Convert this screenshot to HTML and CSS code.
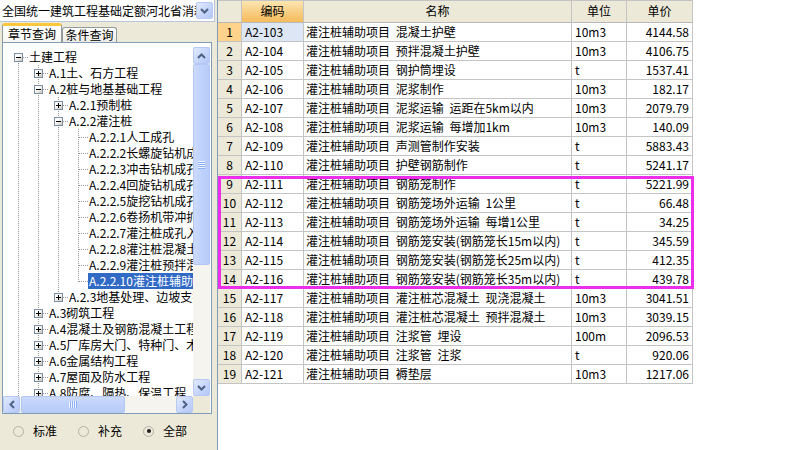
FILE: index.html
```html
<!DOCTYPE html>
<html lang="zh-CN">
<head>
<meta charset="utf-8">
<title>定额查询</title>
<link rel="stylesheet" href="styles.css">
</head>
<body>
<div class="app">
  <aside class="left">
    <div class="combo">
      <span class="combo-text">全国统一建筑工程基础定额河北省消耗量定额</span>
      <span class="sb-btn combo-btn"><svg width="9" height="6" viewBox="0 0 9 6"><path d="M1 1 L4.5 4.5 L8 1" fill="none" stroke="#4D6185" stroke-width="2"/></svg></span>
    </div>
    <div class="tabs">
      <div class="tab active">章节查询</div>
      <div class="tab">条件查询</div>
    </div>
    <div class="tree-box">
      <div class="tree">
        <div class="node"><i class="g f"><b class="exp minus"></b></i><span class="label">土建工程</span></div>
        <div class="node"><i class="g v"></i><i class="g t"><b class="exp plus"></b></i><span class="label">A.1土、石方工程</span></div>
        <div class="node"><i class="g v"></i><i class="g t"><b class="exp minus"></b></i><span class="label">A.2桩与地基基础工程</span></div>
        <div class="node"><i class="g v"></i><i class="g v"></i><i class="g t"><b class="exp plus"></b></i><span class="label">A.2.1预制桩</span></div>
        <div class="node"><i class="g v"></i><i class="g v"></i><i class="g t"><b class="exp minus"></b></i><span class="label">A.2.2灌注桩</span></div>
        <div class="node"><i class="g v"></i><i class="g v"></i><i class="g v"></i><i class="g t"></i><span class="label">A.2.2.1人工成孔</span></div>
        <div class="node"><i class="g v"></i><i class="g v"></i><i class="g v"></i><i class="g t"></i><span class="label">A.2.2.2长螺旋钻机成孔</span></div>
        <div class="node"><i class="g v"></i><i class="g v"></i><i class="g v"></i><i class="g t"></i><span class="label">A.2.2.3冲击钻机成孔</span></div>
        <div class="node"><i class="g v"></i><i class="g v"></i><i class="g v"></i><i class="g t"></i><span class="label">A.2.2.4回旋钻机成孔</span></div>
        <div class="node"><i class="g v"></i><i class="g v"></i><i class="g v"></i><i class="g t"></i><span class="label">A.2.2.5旋挖钻机成孔</span></div>
        <div class="node"><i class="g v"></i><i class="g v"></i><i class="g v"></i><i class="g t"></i><span class="label">A.2.2.6卷扬机带冲抓锥成孔</span></div>
        <div class="node"><i class="g v"></i><i class="g v"></i><i class="g v"></i><i class="g t"></i><span class="label">A.2.2.7灌注桩成孔入岩增加</span></div>
        <div class="node"><i class="g v"></i><i class="g v"></i><i class="g v"></i><i class="g t"></i><span class="label">A.2.2.8灌注桩混凝土</span></div>
        <div class="node"><i class="g v"></i><i class="g v"></i><i class="g v"></i><i class="g t"></i><span class="label">A.2.2.9灌注桩预拌混凝土</span></div>
        <div class="node"><i class="g v"></i><i class="g v"></i><i class="g v"></i><i class="g l"></i><span class="label selected">A.2.2.10灌注桩辅助项目</span></div>
        <div class="node"><i class="g v"></i><i class="g v"></i><i class="g l"><b class="exp plus"></b></i><span class="label">A.2.3地基处理、边坡支护</span></div>
        <div class="node"><i class="g v"></i><i class="g t"><b class="exp plus"></b></i><span class="label">A.3砌筑工程</span></div>
        <div class="node"><i class="g v"></i><i class="g t"><b class="exp plus"></b></i><span class="label">A.4混凝土及钢筋混凝土工程</span></div>
        <div class="node"><i class="g v"></i><i class="g t"><b class="exp plus"></b></i><span class="label">A.5厂库房大门、特种门、木结构工程</span></div>
        <div class="node"><i class="g v"></i><i class="g t"><b class="exp plus"></b></i><span class="label">A.6金属结构工程</span></div>
        <div class="node"><i class="g v"></i><i class="g t"><b class="exp plus"></b></i><span class="label">A.7屋面及防水工程</span></div>
        <div class="node"><i class="g v"></i><i class="g t"><b class="exp plus"></b></i><span class="label">A.8防腐、隔热、保温工程</span></div>
      </div>
      <div class="vscroll">
        <div class="sb-btn"><svg width="9" height="6" viewBox="0 0 9 6"><path d="M1 5 L4.5 1.5 L8 5" fill="none" stroke="#4D6185" stroke-width="2"/></svg></div>
        <div class="sb-thumb vthumb"><span class="grip-v"></span></div>
        <div class="sb-track"></div>
        <div class="sb-btn"><svg width="9" height="6" viewBox="0 0 9 6"><path d="M1 1 L4.5 4.5 L8 1" fill="none" stroke="#4D6185" stroke-width="2"/></svg></div>
      </div>
      <div class="hscroll">
        <div class="sb-btn"><svg width="6" height="9" viewBox="0 0 6 9"><path d="M5 1 L1.5 4.5 L5 8" fill="none" stroke="#4D6185" stroke-width="2"/></svg></div>
        <div class="sb-thumb hthumb"><span class="grip-h"></span></div>
        <div class="sb-track"></div>
        <div class="sb-btn"><svg width="6" height="9" viewBox="0 0 6 9"><path d="M1 1 L4.5 4.5 L1 8" fill="none" stroke="#4D6185" stroke-width="2"/></svg></div>
      </div>
      <div class="sb-corner"></div>
    </div>
    <div class="radios">
      <label class="radio"><span class="dot"></span>标准</label>
      <label class="radio"><span class="dot"></span>补充</label>
      <label class="radio"><span class="dot checked"></span>全部</label>
    </div>
  </aside>

  <main class="right">
    <div class="grid">
      <div class="hd corner"></div><div class="hd sel-col">编码</div><div class="hd">名称</div><div class="hd">单位</div><div class="hd">单价</div>

      <div class="rn cur">1</div><div class="c code focus">A2-103</div><div class="c name">灌注桩辅助项目 混凝土护壁</div><div class="c">10m3</div><div class="c num">4144.58</div>
      <div class="rn">2</div><div class="c code">A2-104</div><div class="c name">灌注桩辅助项目 预拌混凝土护壁</div><div class="c">10m3</div><div class="c num">4106.75</div>
      <div class="rn">3</div><div class="c code">A2-105</div><div class="c name">灌注桩辅助项目 钢护筒埋设</div><div class="c">t</div><div class="c num">1537.41</div>
      <div class="rn">4</div><div class="c code">A2-106</div><div class="c name">灌注桩辅助项目 泥浆制作</div><div class="c">10m3</div><div class="c num">182.17</div>
      <div class="rn">5</div><div class="c code">A2-107</div><div class="c name">灌注桩辅助项目 泥浆运输 运距在5km以内</div><div class="c">10m3</div><div class="c num">2079.79</div>
      <div class="rn">6</div><div class="c code">A2-108</div><div class="c name">灌注桩辅助项目 泥浆运输 每增加1km</div><div class="c">10m3</div><div class="c num">140.09</div>
      <div class="rn">7</div><div class="c code">A2-109</div><div class="c name">灌注桩辅助项目 声测管制作安装</div><div class="c">t</div><div class="c num">5883.43</div>
      <div class="rn">8</div><div class="c code">A2-110</div><div class="c name">灌注桩辅助项目 护壁钢筋制作</div><div class="c">t</div><div class="c num">5241.17</div>
      <div class="rn">9</div><div class="c code">A2-111</div><div class="c name">灌注桩辅助项目 钢筋笼制作</div><div class="c">t</div><div class="c num">5221.99</div>
      <div class="rn">10</div><div class="c code">A2-112</div><div class="c name">灌注桩辅助项目 钢筋笼场外运输 1公里</div><div class="c">t</div><div class="c num">66.48</div>
      <div class="rn">11</div><div class="c code">A2-113</div><div class="c name">灌注桩辅助项目 钢筋笼场外运输 每增1公里</div><div class="c">t</div><div class="c num">34.25</div>
      <div class="rn">12</div><div class="c code">A2-114</div><div class="c name">灌注桩辅助项目 钢筋笼安装(钢筋笼长15m以内)</div><div class="c">t</div><div class="c num">345.59</div>
      <div class="rn">13</div><div class="c code">A2-115</div><div class="c name">灌注桩辅助项目 钢筋笼安装(钢筋笼长25m以内)</div><div class="c">t</div><div class="c num">412.35</div>
      <div class="rn">14</div><div class="c code">A2-116</div><div class="c name">灌注桩辅助项目 钢筋笼安装(钢筋笼长35m以内)</div><div class="c">t</div><div class="c num">439.78</div>
      <div class="rn">15</div><div class="c code">A2-117</div><div class="c name">灌注桩辅助项目 灌注桩芯混凝土 现浇混凝土</div><div class="c">10m3</div><div class="c num">3041.51</div>
      <div class="rn">16</div><div class="c code">A2-118</div><div class="c name">灌注桩辅助项目 灌注桩芯混凝土 预拌混凝土</div><div class="c">10m3</div><div class="c num">3039.15</div>
      <div class="rn">17</div><div class="c code">A2-119</div><div class="c name">灌注桩辅助项目 注浆管 埋设</div><div class="c">100m</div><div class="c num">2096.53</div>
      <div class="rn">18</div><div class="c code">A2-120</div><div class="c name">灌注桩辅助项目 注浆管 注浆</div><div class="c">t</div><div class="c num">920.06</div>
      <div class="rn">19</div><div class="c code">A2-121</div><div class="c name">灌注桩辅助项目 褥垫层</div><div class="c">10m3</div><div class="c num">1217.06</div>
    </div>
    <div class="mark"></div>
  </main>
</div>
</body>
</html>
```

FILE: styles.css
```css
* { box-sizing: border-box; }
html, body { margin: 0; padding: 0; }
body {
  width: 810px;
  height: 450px;
  overflow: hidden;
  background: #ECE9D8;
  font-family: "Noto Sans CJK SC", "Liberation Sans", sans-serif;
  font-size: 12px;
  color: #000;
}
.app { display: flex; height: 450px; }

/* ---------- left panel ---------- */
.left {
  width: 217px;
  flex: none;
  display: flex;
  flex-direction: column;
}
.combo {
  width: 215px;
  height: 22px;
  background: #fff;
  border-right: 1px solid #B8C6DD;
  border-bottom: 1px solid #B8C6DD;
  display: flex;
  align-items: center;
  padding-left: 2px;
  padding-right: 1px;
}
.combo-text {
  flex: 1;
  overflow: hidden;
  white-space: nowrap;
  line-height: 20px;
}
.combo-btn { width: 17px; height: 17px; flex: none; }

.sb-btn {
  width: 17px;
  height: 17px;
  flex: none;
  display: flex;
  align-items: center;
  justify-content: center;
  border: 1px solid #B7C9F3;
  border-radius: 2px;
  background: linear-gradient(135deg, #E1EAFE 0%, #C4D4FB 60%, #B4C8F6 100%);
}
.sb-btn svg { display: block; }

.tabs {
  height: 20px;
  display: flex;
  align-items: flex-end;
  padding-left: 2px;
}
.tab {
  height: 15px;
  width: 55px;
  border: 1px solid #919B9C;
  border-bottom: none;
  border-radius: 3px 3px 0 0;
  background: linear-gradient(#FFFFFF, #ECEBE5);
  text-align: center;
  line-height: 14px;
}
.tab.active {
  height: 19px;
  width: 60px;
  border-top: 3px solid #FFC83C;
  box-shadow: inset 0 0 0 0 #E68B2C;
  background: linear-gradient(#FFFFFF, #F7F6F1);
  line-height: 15px;
}

.tree-box {
  margin-left: 2px;
  width: 210px;
  height: 372px;
  flex: none;
  border: 1px solid #7F9DB9;
  background: #fff;
  padding: 4px 1px 0 0;
  display: grid;
  grid-template-columns: 1fr 17px;
  grid-template-rows: 1fr 17px;
}
.tree {
  overflow: hidden;
  padding: 2px 0 0 5px;
}
.node {
  display: flex;
  align-items: center;
  height: 16px;
  white-space: nowrap;
}
.g {
  flex: none;
  width: 20px;
  height: 16px;
  display: flex;
  align-items: center;
  --dotv: repeating-linear-gradient(to bottom, #9A9A9A 0 1px, transparent 1px 2px);
  --doth: repeating-linear-gradient(to right, #9A9A9A 0 1px, transparent 1px 2px);
}
.g.v { background: var(--dotv) 10px 0 / 1px 16px no-repeat; }
.g.t { background: var(--dotv) 10px 0 / 1px 16px no-repeat, var(--doth) 11px 8px / 9px 1px no-repeat; }
.g.l { background: var(--dotv) 10px 0 / 1px 9px no-repeat, var(--doth) 11px 8px / 9px 1px no-repeat; }
.g.f { background: var(--dotv) 10px 8px / 1px 8px no-repeat, var(--doth) 11px 8px / 9px 1px no-repeat; }
.exp {
  width: 9px;
  height: 9px;
  margin-left: 6px;
  margin-top: 1px;
  border: 1px solid #7B8EA4;
}
.exp.minus {
  background:
    linear-gradient(#000, #000) 1px 3px / 5px 1px no-repeat,
    linear-gradient(135deg, #FFFFFF 35%, #C9C6BA);
}
.exp.plus {
  background:
    linear-gradient(#000, #000) 1px 3px / 5px 1px no-repeat,
    linear-gradient(#000, #000) 3px 1px / 1px 5px no-repeat,
    linear-gradient(135deg, #FFFFFF 35%, #C9C6BA);
}
.label {
  padding: 0 1px;
  line-height: 16px;
  height: 16px;
}
.label.selected {
  background: #316AC5;
  color: #fff;
}

.vscroll {
  display: flex;
  flex-direction: column;
  background: #F5F4EE;
}
.hscroll {
  display: flex;
  background: #F5F4EE;
}
.sb-track { flex: 1; background: #F5F4EE; }
.sb-thumb {
  flex: none;
  display: flex;
  align-items: center;
  justify-content: center;
  border: 1px solid #B4C7F2;
  border-radius: 2px;
  background: linear-gradient(90deg, #CCDAFD, #BDD0FB 60%, #B8CCF8);
}
.vthumb { height: 201px; }
.hthumb { width: 104px; margin-left: 1px; background: linear-gradient(#CCDAFD, #BDD0FB 60%, #B8CCF8); }
.grip-v {
  width: 7px;
  height: 8px;
  background: repeating-linear-gradient(to bottom, #EEF4FE 0 1px, #8DB0F6 1px 2px);
}
.grip-h {
  width: 8px;
  height: 7px;
  background: repeating-linear-gradient(to right, #EEF4FE 0 1px, #8DB0F6 1px 2px);
}
.sb-corner { background: #ECE9D8; }

.radios {
  flex: 1;
  display: flex;
  align-items: center;
  padding-left: 13px;
  padding-bottom: 2px;
}
.radio {
  display: flex;
  align-items: center;
  margin-right: 21px;
  line-height: 16px;
}
.dot {
  width: 11px;
  height: 11px;
  border-radius: 50%;
  border: 1px solid #B3B2A8;
  margin-right: 9px;
  display: flex;
  align-items: center;
  justify-content: center;
}
.dot.checked::after {
  content: "";
  width: 4px;
  height: 4px;
  border-radius: 50%;
  background: #1E1E1E;
}

/* ---------- right panel ---------- */
.right {
  flex: 1;
  position: relative;
  background: #fff;
  border-left: 1px solid #7F9DB9;
}
.grid {
  display: grid;
  grid-template-columns: 24px 62px 268px 55px 66px;
  grid-template-rows: 23px;
  grid-auto-rows: 19px;
  width: 475px;
}
.hd {
  background: #ECE9D8;
  border-top: 1px solid #C4C4C4;
  border-right: 1px solid #C4C4C4;
  border-bottom: 1px solid #B8B8B8;
  text-align: center;
  line-height: 20px;
}
.hd.sel-col {
  background: linear-gradient(#FCE6B2, #F8CD80 55%, #F4BC5C);
}
.rn {
  background: #ECE9D8;
  border-right: 1px solid #C4C4C4;
  border-bottom: 1px solid #C4C4C4;
  text-align: center;
  line-height: 18px;
}
.rn.cur { background: #FFD38C; }
.c {
  border-right: 1px solid #C4C4C4;
  border-bottom: 1px solid #C4C4C4;
  line-height: 18px;
  padding: 0 3px;
  white-space: nowrap;
  overflow: hidden;
}
.c.name { padding-left: 2px; word-spacing: 3px; }
.c.num { text-align: right; }
.c.focus { background: #DCE6F4; }

.mark {
  position: absolute;
  left: 0;
  top: 176px;
  width: 476px;
  height: 113px;
  border: 3px solid #EC2DEC;
  pointer-events: none;
}
```
